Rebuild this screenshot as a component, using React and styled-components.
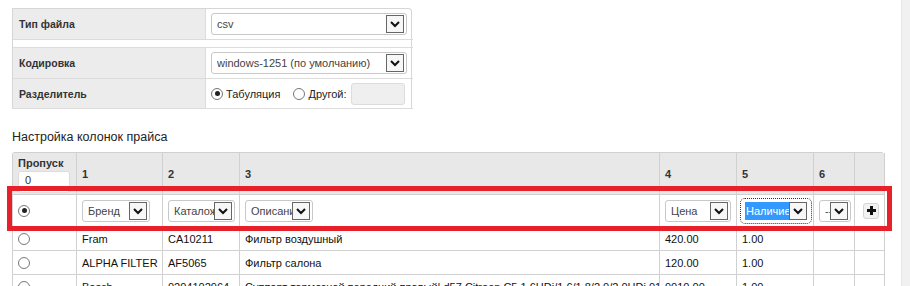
import styled, { createGlobalStyle } from "styled-components";

const GlobalStyle = createGlobalStyle`
  html, body {
    margin: 0;
    padding: 0;
    background: #fff;
  }
  body {
    font-family: "Liberation Sans", Arial, sans-serif;
    font-size: 11px;
    color: #222;
  }
`;

const Page = styled.div`
  display: flex;
  width: 910px;
  height: 286px;
  overflow: hidden;
`;

const Main = styled.div`
  flex: 1;
  padding: 8px 0 0 12px;
`;

const Scrollbar = styled.div`
  width: 8px;
  background: #f1f1f1;
  border-left: 1px solid #e6e6e6;
`;

const FormTable = styled.div`
  width: 400px;
  display: grid;
  grid-template-columns: 193px 207px;
  border: 1px solid #d6d6d6;
  border-bottom: none;
  border-radius: 0 4px 0 0;
  box-sizing: border-box;
  font-size: 10.5px;
`;

const Label = styled.div`
  background: #ececec;
  font-weight: bold;
  color: #333;
  height: ${p => p.$h}px;
  padding-left: 6px;
  display: flex;
  align-items: center;
  border-bottom: 1px solid #dcdcdc;
  border-right: 1px solid #dcdcdc;
`;

const Value = styled.div`
  height: ${p => p.$h}px;
  padding: 0 5px;
  display: flex;
  align-items: center;
  gap: 3px;
  border-bottom: 1px solid #dcdcdc;
`;

const Spacer = styled.div`
  grid-column: 1 / 3;
  height: 7px;
  border-bottom: 1px solid #dcdcdc;
`;

const SelectBox = styled.div`
  box-sizing: border-box;
  width: ${p => p.$w}px;
  height: ${p => p.$h || 22}px;
  border: 1px solid #c8c8c8;
  border-radius: 3px;
  background: #fff;
  display: flex;
  align-items: center;
  padding: 0 2px 0 5px;
  color: #444;
  font-size: 11px;
  outline: ${p => (p.$focus ? "1px dotted #333" : "none")};
  outline-offset: ${p => (p.$focus ? "1px" : "0")};
  border-color: ${p => (p.$focus ? "transparent" : "#c8c8c8")};
`;

const SelectText = styled.span`
  flex: 1;
  overflow: hidden;
  white-space: nowrap;
  color: ${p => (p.$sel ? "#fff" : "#444")};
  background: ${p => (p.$sel ? "#3399ff" : "transparent")};
  margin-left: ${p => (p.$sel ? "-3px" : "0")};
  padding-left: ${p => (p.$sel ? "1px" : "0")};
  line-height: 18px;
`;

const ArrowBtn = styled.span`
  flex: none;
  box-sizing: border-box;
  width: 18px;
  height: 18px;
  border: 1px solid #666;
  background: #f7f7f7;
  display: flex;
  align-items: center;
  justify-content: center;
`;

const Radio = styled.span`
  box-sizing: border-box;
  width: 12px;
  height: 12px;
  border: 1px solid #777;
  border-radius: 50%;
  background: #fff;
  display: inline-flex;
  align-items: center;
  justify-content: center;
  flex: none;
  &::after {
    content: "";
    width: 5px;
    height: 5px;
    border-radius: 50%;
    background: ${p => (p.$on ? "#222" : "transparent")};
  }
`;

const RadioLabel = styled.span`
  color: #222;
  font-size: 11px;
  white-space: nowrap;
  margin-right: ${p => p.$mr || 0}px;
`;

const TextInput = styled.div`
  box-sizing: border-box;
  width: ${p => p.$w}px;
  height: ${p => p.$h}px;
  border: 1px solid #dcdcdc;
  border-radius: 3px;
  background: ${p => p.$bg || "#fff"};
  padding: ${p => (p.$top ? "2px 6px 0" : "0 6px")};
  display: flex;
  align-items: ${p => (p.$top ? "flex-start" : "center")};
  font-weight: normal;
  color: #333;
  flex: none;
`;

const Heading = styled.div`
  font-size: 12.5px;
  color: #222;
  margin: 21px 0 7px;
  line-height: 15px;
`;

const GridWrap = styled.div`
  position: relative;
  width: 872px;
`;

const Grid = styled.div`
  display: grid;
  grid-template-columns: 64px 86px 77px 420px 77px 77px 41px 30px;
  border-left: 1px solid #d0d0d0;
  border-top: 1px solid #d0d0d0;
  border-radius: 3px 3px 0 0;
`;

const Cell = styled.div`
  box-sizing: border-box;
  height: ${p => p.$h}px;
  border-right: 1px solid #d0d0d0;
  border-bottom: 1px solid #d0d0d0;
  padding: 0 5px;
  display: flex;
  align-items: center;
  white-space: nowrap;
  overflow: hidden;
  background: ${p => (p.$head ? "#e8e8e8" : "#fff")};
  font-weight: ${p => (p.$head ? "bold" : "normal")};
  color: ${p => (p.$head ? "#333" : "#111")};
`;

const SkipCell = styled(Cell)`
  flex-direction: column;
  align-items: flex-start;
  justify-content: flex-start;
  padding-top: 4px;
  gap: 1px;
  line-height: 13px;
`;

const PlusBtn = styled.span`
  box-sizing: border-box;
  width: 17px;
  height: 16px;
  border: 1px solid #d4d4d4;
  border-radius: 3px;
  background: #f2f2f2;
  display: flex;
  align-items: center;
  justify-content: center;
  margin-left: 3px;
`;

const Highlight = styled.div`
  position: absolute;
  left: -5px;
  top: 34px;
  width: 885px;
  height: 45px;
  box-sizing: border-box;
  border: 5px solid #e8202a;
  pointer-events: none;
`;

const Chevron = () => (
  <svg width="12" height="10" viewBox="0 0 12 10">
    <path d="M2 3 L6 7 L10 3" fill="none" stroke="#111" strokeWidth="2" />
  </svg>
);

const Select = ({ w, h, text, focus, sel }) => (
  <SelectBox $w={w} $h={h} $focus={focus}>
    <SelectText $sel={sel}>{text}</SelectText>
    <ArrowBtn>
      <Chevron />
    </ArrowBtn>
  </SelectBox>
);

const rows = [
  ["Fram", "CA10211", "Фильтр воздушный", "420.00", "1.00"],
  ["ALPHA FILTER", "AF5065", "Фильтр салона", "120.00", "1.00"],
  [
    "Bosch",
    "0204102964",
    "Суппорт тормозной передний правый| d57 Citroen C5 1.6HDi/1.6/1.8/2.0/2.0HDi 01",
    "9010.00",
    "1.00",
  ],
];

export default function App() {
  return (
    <Page>
      <GlobalStyle />
      <Main>
        <FormTable>
          <Label $h={30}>Тип файла</Label>
          <Value $h={30}>
            <Select w={196} text="csv" />
          </Value>
          <Spacer />
          <Label $h={30}>Кодировка</Label>
          <Value $h={30}>
            <Select w={196} text="windows-1251 (по умолчанию)" />
          </Value>
          <Label $h={29}>Разделитель</Label>
          <Value $h={29}>
            <Radio $on />
            <RadioLabel $mr={10}>Табуляция</RadioLabel>
            <Radio />
            <RadioLabel $mr={2}>Другой:</RadioLabel>
            <TextInput $w={54} $h={22} $bg="#efefef" />
          </Value>
        </FormTable>

        <Heading>Настройка колонок прайса</Heading>

        <GridWrap>
          <Grid>
            <SkipCell $head $h={42}>
              Пропуск
              <TextInput $w={52} $h={22} $top>0</TextInput>
            </SkipCell>
            <Cell $head $h={42}>1</Cell>
            <Cell $head $h={42}>2</Cell>
            <Cell $head $h={42}>3</Cell>
            <Cell $head $h={42}>4</Cell>
            <Cell $head $h={42}>5</Cell>
            <Cell $head $h={42}>6</Cell>
            <Cell $head $h={42} />

            <Cell $h={32}>
              <Radio $on />
            </Cell>
            <Cell $h={32}>
              <Select w={68} text="Бренд" />
            </Cell>
            <Cell $h={32}>
              <Select w={67} text="Каталожный" />
            </Cell>
            <Cell $h={32}>
              <Select w={68} text="Описание" />
            </Cell>
            <Cell $h={32}>
              <Select w={67} text="Цена" />
            </Cell>
            <Cell $h={32}>
              <Select w={68} text="Наличие" focus sel />
            </Cell>
            <Cell $h={32}>
              <Select w={32} text="--" />
            </Cell>
            <Cell $h={32}>
              <PlusBtn>
                <svg width="9" height="9" viewBox="0 0 9 9">
                  <path d="M3 0h3v3h3v3H6v3H3V6H0V3h3z" fill="#111" />
                </svg>
              </PlusBtn>
            </Cell>

            {rows.map((r, k) => [
              <Cell key={`r${k}`} $h={24}>
                <Radio />
              </Cell>,
              ...r.map((v, i) => (
                <Cell key={`${k}-${i}`} $h={24}>
                  {v}
                </Cell>
              )),
              <Cell key={`a${k}`} $h={24} />,
              <Cell key={`b${k}`} $h={24} />,
            ])}
          </Grid>
          <Highlight />
        </GridWrap>
      </Main>
      <Scrollbar />
    </Page>
  );
}
